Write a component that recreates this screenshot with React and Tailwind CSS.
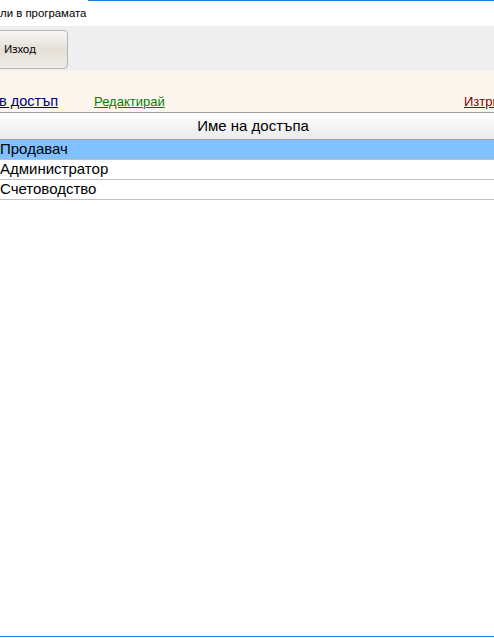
import React from 'react';

const rows = ["Продавач", "Администратор", "Счетоводство"];

const App = () => {
  return (
    <div className="w-[494px] h-[638px] flex flex-col overflow-hidden bg-white font-['Liberation_Sans',Arial,sans-serif]">

      {/* TITLE */}
      <div className="flex h-[26px] shrink-0">
        <div className="pt-[5px] text-[11.4px] leading-[16px] text-black whitespace-nowrap">
          ли в програмата
        </div>
        <div className="flex-1 ml-[2px] border-t border-[#1a7fd6]"></div>
      </div>

      {/* TOOLBAR */}
      <div className="h-[45px] shrink-0 bg-[#efefef] flex items-center overflow-hidden">
        <button className="-ml-[20px] w-[88px] h-[39px] mt-[1px] rounded-[4px] border border-[#b4b4b4] bg-gradient-to-b from-[#f8f7f5] via-[#e4dfd6] to-[#efece6] flex items-center pl-[23px] text-[11px] text-black font-['Noto_Sans',sans-serif]">
          Изход
        </button>
      </div>

      {/* ACTIONS */}
      <div className="h-[41px] shrink-0 bg-[#fdf6ef] flex items-end pb-[3px] whitespace-nowrap">
        <a className="-ml-[1px] text-[14.5px] leading-[16px] text-[#000080] underline">в достъп</a>
        <a className="ml-[36px] text-[13px] leading-[15px] text-[#008000] underline">Редактирай</a>
        <a className="ml-auto -mr-[10px] w-[40px] text-[13px] leading-[15px] text-[#800000] underline overflow-hidden">Изтрий</a>
      </div>

      {/* TABLE */}
      <div className="h-[28px] shrink-0 border-y border-[#a0a0a0] bg-gradient-to-b from-white to-[#ebebeb] flex items-center justify-center pl-[12px] text-[15px] text-black">
        Име на достъпа
      </div>
      {rows.map((r, i) => (
        <div
          key={r}
          className={
            i === 0
              ? "h-[20px] shrink-0 border-b border-[#c0c0c0] bg-[#80c0ff] flex items-center text-[15px] text-black"
              : "h-[20px] shrink-0 border-b border-[#c0c0c0] flex items-center text-[15px] text-black"
          }
        >
          {r}
        </div>
      ))}

      <div className="flex-1"></div>
      <div className="h-[1px] shrink-0 bg-[#2e7fc9] mb-[1px]"></div>
    </div>
  );
};

export default App;
